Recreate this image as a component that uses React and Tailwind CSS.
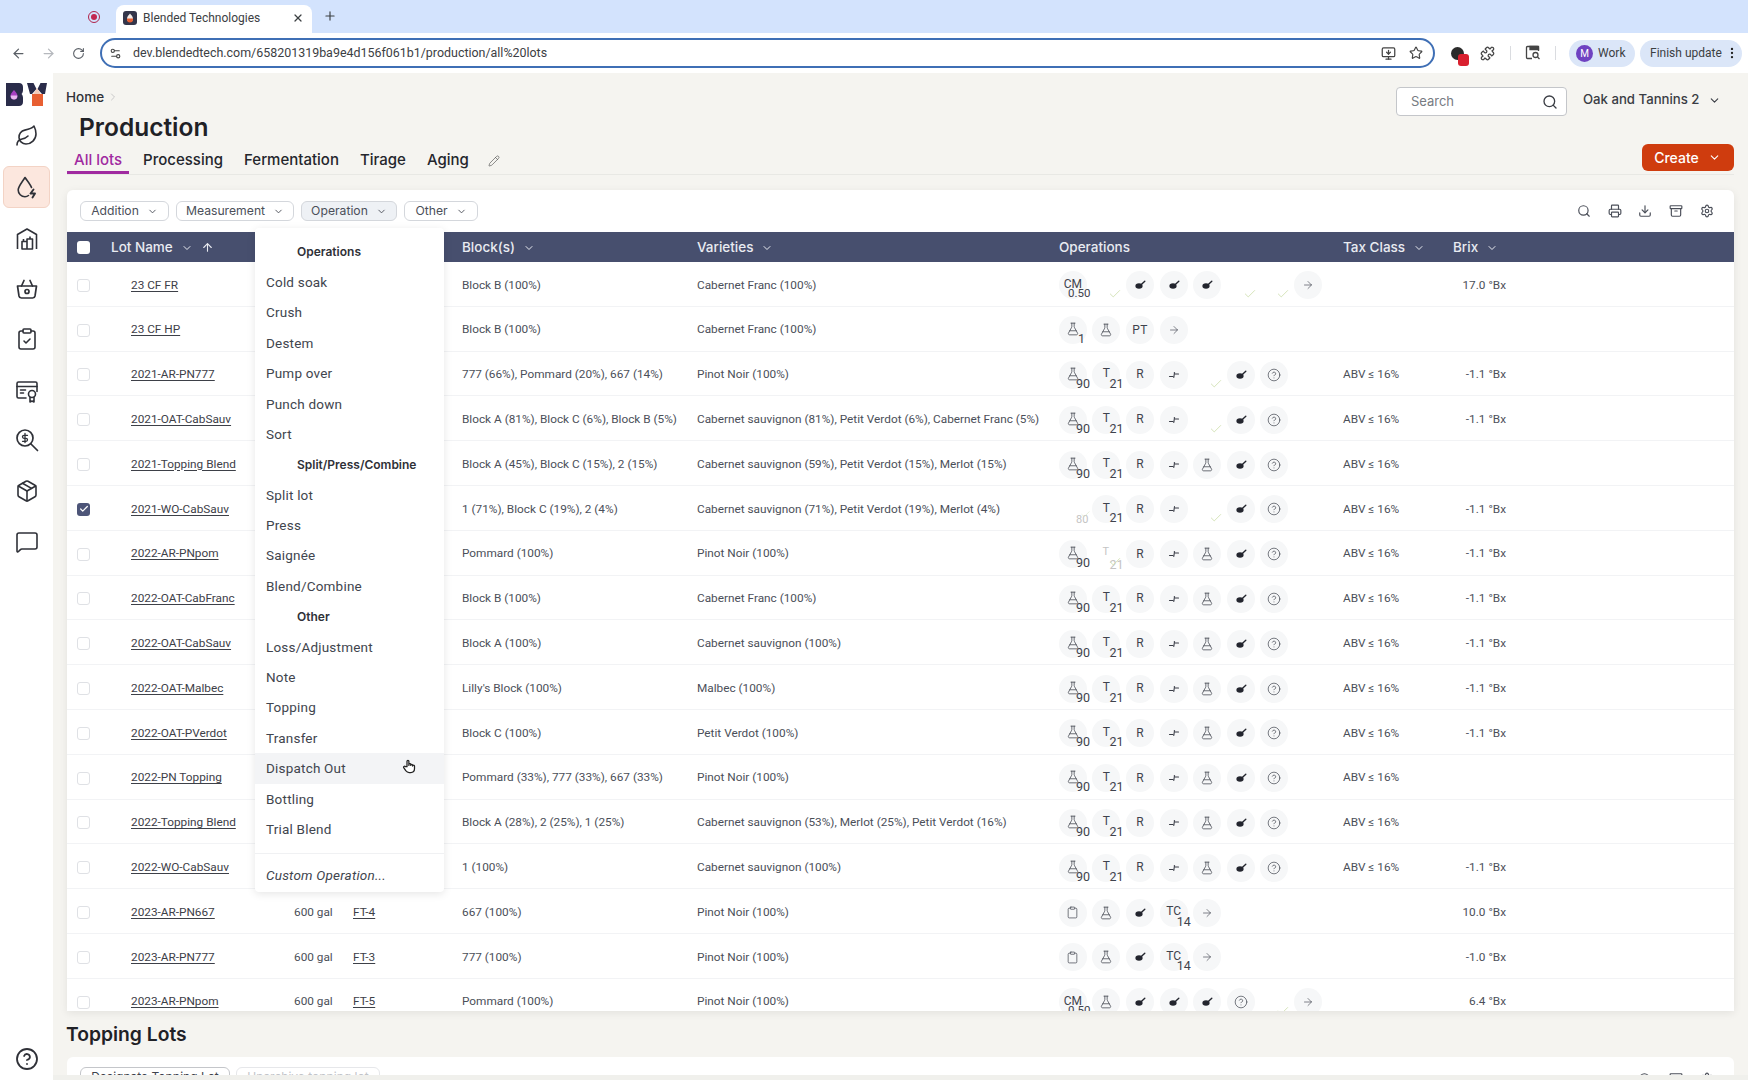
import { ArrowLeft, ArrowRight, Archive, Check, ChevronDown, ChevronRight, CircleHelp, Clipboard, ClipboardCheck, Download, EllipsisVertical, FlaskConical, Leaf, MessageSquare, Package, Pencil, Plus, Printer, RotateCw, Search, Settings, Settings2, Star, X, ArrowUp, Puzzle, MonitorDown } from 'lucide-react';

const full = ['f90', 't21', 'r', 's', 'k', 'p', 'h'];
const gap = ['f90', 't21', 'r', 's', 'c', 'p', 'h'];

const rows = [
    { lot: '23 CF FR', blocks: 'Block B (100%)', varieties: 'Cabernet Franc (100%)', ops: ['cm', 'c', 'p', 'p', 'p', 'c', 'c', 'a'], brix: '17.0 °Bx' },
    { lot: '23 CF HP', blocks: 'Block B (100%)', varieties: 'Cabernet Franc (100%)', ops: ['f1', 'k', 'pt', 'a'] },
    { lot: '2021-AR-PN777', blocks: '777 (66%), Pommard (20%), 667 (14%)', varieties: 'Pinot Noir (100%)', ops: gap, tax: true, brix: '-1.1 °Bx' },
    { lot: '2021-OAT-CabSauv', blocks: 'Block A (81%), Block C (6%), Block B (5%)', varieties: 'Cabernet sauvignon (81%), Petit Verdot (6%), Cabernet Franc (5%)', ops: gap, tax: true, brix: '-1.1 °Bx' },
    { lot: '2021-Topping Blend', blocks: 'Block A (45%), Block C (15%), 2 (15%)', varieties: 'Cabernet sauvignon (59%), Petit Verdot (15%), Merlot (15%)', ops: full, tax: true },
    { lot: '2021-WO-CabSauv', checked: true, blocks: '1 (71%), Block C (19%), 2 (4%)', varieties: 'Cabernet sauvignon (71%), Petit Verdot (19%), Merlot (4%)', ops: ['x80', 't21', 'r', 's', 'c', 'p', 'h'], tax: true, brix: '-1.1 °Bx' },
    { lot: '2022-AR-PNpom', blocks: 'Pommard (100%)', varieties: 'Pinot Noir (100%)', ops: ['f90', 'x21', 'r', 's', 'k', 'p', 'h'], tax: true, brix: '-1.1 °Bx' },
    { lot: '2022-OAT-CabFranc', blocks: 'Block B (100%)', varieties: 'Cabernet Franc (100%)', ops: full, tax: true, brix: '-1.1 °Bx' },
    { lot: '2022-OAT-CabSauv', blocks: 'Block A (100%)', varieties: 'Cabernet sauvignon (100%)', ops: full, tax: true, brix: '-1.1 °Bx' },
    { lot: '2022-OAT-Malbec', blocks: "Lilly's Block (100%)", varieties: 'Malbec (100%)', ops: full, tax: true, brix: '-1.1 °Bx' },
    { lot: '2022-OAT-PVerdot', blocks: 'Block C (100%)', varieties: 'Petit Verdot (100%)', ops: full, tax: true, brix: '-1.1 °Bx' },
    { lot: '2022-PN Topping', blocks: 'Pommard (33%), 777 (33%), 667 (33%)', varieties: 'Pinot Noir (100%)', ops: full, tax: true },
    { lot: '2022-Topping Blend', blocks: 'Block A (28%), 2 (25%), 1 (25%)', varieties: 'Cabernet sauvignon (53%), Merlot (25%), Petit Verdot (16%)', ops: full, tax: true },
    { lot: '2022-WO-CabSauv', blocks: '1 (100%)', varieties: 'Cabernet sauvignon (100%)', ops: full, tax: true, brix: '-1.1 °Bx' },
    { lot: '2023-AR-PN667', vol: '600 gal', vessel: 'FT-4', blocks: '667 (100%)', varieties: 'Pinot Noir (100%)', ops: ['b', 'k', 'p', 'tc', 'a'], brix: '10.0 °Bx' },
    { lot: '2023-AR-PN777', vol: '600 gal', vessel: 'FT-3', blocks: '777 (100%)', varieties: 'Pinot Noir (100%)', ops: ['b', 'k', 'p', 'tc', 'a'], brix: '-1.0 °Bx' },
    { lot: '2023-AR-PNpom', vol: '600 gal', vessel: 'FT-5', blocks: 'Pommard (100%)', varieties: 'Pinot Noir (100%)', ops: ['cm', 'k', 'p', 'p', 'p', 'h', 'c', 'a'], brix: '6.4 °Bx' },
];

const menu = [
    { title: 'Operations', items: ['Cold soak', 'Crush', 'Destem', 'Pump over', 'Punch down', 'Sort'] },
    { title: 'Split/Press/Combine', items: ['Split lot', 'Press', 'Saignée', 'Blend/Combine'] },
    { title: 'Other', items: ['Loss/Adjustment', 'Note', 'Topping', 'Transfer', 'Dispatch Out', 'Bottling', 'Trial Blend'] },
];

function Ladle() {
    return (
        <svg width="14" height="14" viewBox="0 0 14 14" className="text-[#23252e]">
            <ellipse cx="6" cy="8" rx="3.600" ry="2.700" fill="currentColor" />
            <path d="M8.300 6.500 11.800 3.200" stroke="currentColor" strokeWidth="1.400" fill="none" strokeLinecap="round" />
        </svg>
    );
}

function SplitArrow() {
    return (
        <svg width="14" height="14" viewBox="0 0 14 14" fill="none" stroke="#3a3d47" strokeWidth="1.100" strokeLinecap="round">
            <path d="M2.500 8.500H6" />
            <path d="M8 6h3.500" />
            <path d="M7.500 4.500 6.800 9.500" />
        </svg>
    );
}

function Circle({ children }) {
    return <span className="w-[28px] h-[28px] rounded-full bg-[#f6f7f8] flex items-center justify-center text-[12px] text-[#3f434d]">{children}</span>;
}

function Sub({ children }) {
    return <span className="absolute left-[20px] top-[16px] text-[12.500px] leading-[14px] text-[#3f434d]">{children}</span>;
}

function Op({ type }) {
    let inner = null;
    if (type === 'c') {
        return (
            <span className="w-[33.6px] h-[28px] flex items-center justify-center">
                <Check size={14} strokeWidth={1.500} className="text-[#cfdfb0] translate-x-[9px] translate-y-[9px]" />
            </span>
        );
    }
    if (type === 'x80') {
        return (
            <span className="relative w-[33.6px] h-[28px]">
                <span className="absolute left-[20px] top-[18px] text-[11px] leading-[14px] text-[#c4c4c4]">80</span>
                <Check size={11} strokeWidth={1.200} className="absolute left-[24px] top-[14px] text-[#d6e3c3]" />
            </span>
        );
    }
    if (type === 'x21') {
        return (
            <span className="relative w-[33.6px] h-[28px]">
                <span className="absolute left-[13px] top-[5px] text-[11px] leading-[14px] text-[#c4c4c4]">T</span>
                <span className="absolute left-[20px] top-[18px] text-[12.500px] leading-[14px] text-[#c4c4c4]">21</span>
                <Check size={14} strokeWidth={1.500} className="absolute left-[18px] top-[15px] text-[#cfdfb0]" />
            </span>
        );
    }
    if (type === 'f90' || type === 'f1') inner = <FlaskConical size={14} strokeWidth={1.300} className="-mt-[2px]" />;
    if (type === 'k') inner = <FlaskConical size={14} strokeWidth={1.300} />;
    if (type === 't21') inner = <span className="-mt-[3px]">T</span>;
    if (type === 'r') inner = <span className="-mt-[1px]">R</span>;
    if (type === 'pt') inner = <span className="-mt-[1px] tracking-wide">PT</span>;
    if (type === 's') inner = <SplitArrow />;
    if (type === 'p') inner = <Ladle />;
    if (type === 'h') inner = <CircleHelp size={14} strokeWidth={1.200} />;
    if (type === 'a') inner = <ArrowRight size={12} strokeWidth={1.300} />;
    if (type === 'b') inner = <Clipboard size={13} strokeWidth={1.300} />;
    if (type === 'cm') inner = <span className="-mt-[3px]">CM</span>;
    if (type === 'tc') inner = <span className="-mt-[3px]">TC</span>;
    return (
        <span className="relative w-[33.6px] h-[28px] flex justify-center">
            <Circle>{inner}</Circle>
            {type === 'f90' && <Sub>90</Sub>}
            {type === 'f1' && <span className="absolute left-[22px] top-[16px] text-[12.500px] leading-[14px] text-[#3f434d]">1</span>}
            {type === 't21' && <Sub>21</Sub>}
            {type === 'tc' && <Sub>14</Sub>}
            {type === 'cm' && <span className="absolute left-[12px] top-[16px] text-[11.500px] leading-[13px] text-[#3f434d]">0.50</span>}
        </span>
    );
}

function Filter({ label, active, className }) {
    return (
        <button className={`h-[20px] rounded-md border border-[#d4d7dc] flex items-center justify-center gap-[8px] text-[12.200px] text-[#4b4f59] ${active ? 'bg-[#eef1f5]' : 'bg-white'} ${className}`}>
            {label} <ChevronDown size={11} />
        </button>
    );
}

function HeadChevron({ label, className }) {
    return (
        <span className={`flex items-center gap-[8px] text-[13.500px] font-medium ${className}`}>
            {label} <ChevronDown size={12} />
        </span>
    );
}

function Logo() {
    return (
        <svg width="41" height="23" viewBox="0 0 41 23">
            <path d="M0 0h13c2.500 0 4 1.500 4 4v3c0 1.500-.5 3-1.500 4 1 1 1.500 2.500 1.500 4v4c0 2.500-1.500 4-4 4H0z" fill="#2a2c4a" />
            <path d="M8 7c1.300 1.800 3.500 3.400 3.500 6a3.500 3.500 0 0 1-7 0c0-2.600 2.200-4.200 3.500-6z" fill="#a63fc0" />
            <path d="M4.700 12.500h6.600c.2 2.700-1.300 4-3.300 4s-3.500-1.300-3.300-4z" fill="#e9b7ef" />
            <path d="M21 0h6.500l3 6-4.500 5h-2zM41 0h-6.500l-3 6 4.500 5h3z" fill="#2a2c4a" />
            <path d="M31 5l4 6.500h-8z" fill="#f3c9b8" />
            <rect x="26" y="11" width="11" height="12" fill="#e85f32" />
        </svg>
    );
}

function DropBolt() {
    return (
        <svg width="24" height="26" viewBox="0 0 24 26" fill="none" stroke="#2f3138" strokeWidth="1.600" strokeLinecap="round" strokeLinejoin="round">
            <path d="M13.500 21.500c-1 .8-2.300 1.200-3.500 1.200a6.800 6.800 0 0 1-6.800-6.800c0-3.200 3-6.500 6.800-12.400 2.800 4 5.600 7 6.500 10" />
            <path d="M18.500 15.500 15.500 19.500h4.500l-2.500 4" strokeWidth="1.900" />
        </svg>
    );
}

function Building() {
    return (
        <svg width="24" height="24" viewBox="0 0 24 24" fill="none" stroke="#2f3138" strokeWidth="1.600" strokeLinejoin="round">
            <path d="M2.500 22V7.500L12 2l9.500 5.500V22" />
            <path d="M7 22v-7.500h5V22zM12 22v-10h5.500V22zM8.500 14.500V12M15 12V9.500" />
        </svg>
    );
}

function Basket() {
    return (
        <svg width="24" height="24" viewBox="0 0 24 24" fill="none" stroke="#2f3138" strokeWidth="1.700" strokeLinecap="round" strokeLinejoin="round">
            <path d="M2.500 9h19l-1.500 10a2.500 2.500 0 0 1-2.500 2h-11a2.500 2.500 0 0 1-2.500-2z" />
            <path d="M6.500 9 9 3.500M17.500 9 15 3.500" />
            <circle cx="12" cy="14.500" r="2" />
        </svg>
    );
}

function Cert() {
    return (
        <svg width="24" height="24" viewBox="0 0 24 24" fill="none" stroke="#2f3138" strokeWidth="1.600" strokeLinecap="round" strokeLinejoin="round">
            <path d="M11 19H3.500a1.500 1.500 0 0 1-1.500-1.500v-13A1.500 1.500 0 0 1 3.500 3h17A1.500 1.500 0 0 1 22 4.500v8" />
            <path d="M2 7.500h20M5.500 11h5M5.500 14h3" />
            <circle cx="17" cy="15" r="3.500" />
            <path d="M15 18.500V23l2-1 2 1v-4.500" />
        </svg>
    );
}

function MoneySearch() {
    return (
        <svg width="24" height="24" viewBox="0 0 24 24" fill="none" stroke="#2f3138" strokeWidth="1.700" strokeLinecap="round" strokeLinejoin="round">
            <circle cx="10" cy="10" r="8" />
            <path d="M16 16l6.500 6.500" />
            <path d="M10 5.500v9M12.500 7.300H9a1.500 1.500 0 0 0 0 3h2a1.500 1.500 0 0 1 0 3H7.500" strokeWidth="1.300" />
        </svg>
    );
}

function SideSearch() {
    return (
        <svg width="16" height="16" viewBox="0 0 16 16" fill="none" stroke="#444" strokeWidth="1.300">
            <path d="M7 13.500H2.500a1 1 0 0 1-1-1v-10a1 1 0 0 1 1-1h10a1 1 0 0 1 1 1V6" />
            <path d="M5 1.500h8.500v3H5z" fill="#444" />
            <circle cx="10.500" cy="10" r="2.500" />
            <path d="M12.500 12l2 2" />
        </svg>
    );
}

function Favicon() {
    return (
        <svg width="14" height="14" viewBox="0 0 14 14">
            <rect width="14" height="14" rx="3" fill="#33354a" />
            <path d="M7 2.500c1.200 1.500 3 3 3 5.200a3 3 0 0 1-6 0C4 5.500 5.800 4 7 2.500z" fill="#f3ece8" />
            <path d="M4 7.500h6v1a3 3 0 0 1-6 0z" fill="#e85f32" />
        </svg>
    );
}

function BrowserBar() {
    return (
        <div className="font-['Roboto',sans-serif] shrink-0">
            <div className="h-[33px] bg-[#d3e3fd] flex items-end text-[#3c4043]">
                <span className="ml-[88px] mb-[10px] w-[12px] h-[12px] rounded-full border border-[#b0224a] flex items-center justify-center">
                    <span className="w-[6px] h-[6px] rounded-full bg-[#c2264f]" />
                </span>
                <div className="ml-[16px] w-[196px] h-[28px] pb-[3px] bg-white rounded-t-lg flex items-center pl-[7px] pr-[8px]">
                    <Favicon />
                    <span className="ml-[6px] text-[12px] flex-1">Blended Technologies</span>
                    <X size={12} strokeWidth={2.500} />
                </div>
                <Plus size={14} className="ml-[11px] mb-[10px]" />
            </div>
            <div className="h-[40px] bg-white flex items-center text-[#5a5f66]">
                <ArrowLeft size={15} className="ml-[11px]" />
                <ArrowRight size={15} className="ml-[15px] text-[#b5b8bd]" />
                <RotateCw size={13} className="ml-[16px]" />
                <div className="ml-[15px] w-[1335px] h-[30px] rounded-full border-2 border-[#3f6fb5] flex items-center pl-[7px] pr-[10px]">
                    <Settings2 size={13} className="text-[#444]" />
                    <span className="ml-[11px] text-[12.450px] text-[#3c4043] flex-1">dev.blendedtech.com/658201319ba9e4d156f061b1/production/all%20lots</span>
                    <MonitorDown size={15} className="text-[#444]" />
                    <Star size={14} className="ml-[13px] text-[#444]" />
                </div>
                <span className="relative ml-[16px] w-[13px] h-[13px] rounded-full bg-[#2b2b2b]">
                    <span className="absolute left-[7px] top-[7px] w-[11px] h-[12px] rounded-[3px] bg-[#d9202f]" />
                </span>
                <Puzzle size={15} className="ml-[16px] text-[#444]" />
                <span className="ml-[15px] w-px h-[14px] bg-[#dadce0]" />
                <span className="ml-[14px]"><SideSearch /></span>
                <span className="ml-[14px] w-px h-[14px] bg-[#dadce0]" />
                <span className="ml-[13px] w-[66px] h-[27px] rounded-full bg-[#dbe6f8] flex items-center pl-[7px] gap-[5px] text-[12px] text-[#3c4043]">
                    <span className="w-[17px] h-[17px] rounded-full bg-[#6f42c1] text-white text-[10px] flex items-center justify-center">M</span>
                    Work
                </span>
                <span className="ml-[5px] w-[102px] h-[27px] rounded-full bg-[#dbe6f8] flex items-center pl-[10px] text-[12px] text-[#3c4043]">
                    Finish update
                    <EllipsisVertical size={14} className="ml-[3px] text-[#222]" />
                </span>
            </div>
        </div>
    );
}

function Sidebar() {
    return (
        <aside className="w-[53px] shrink-0 bg-white flex flex-col items-center relative pb-[9px]">
            <div className="h-[36px] mt-[3px] flex items-center"><Logo /></div>
            <div className="h-[47px] flex items-center"><Leaf size={24} strokeWidth={1.600} className="text-[#2f3138]" /></div>
            <div className="h-[42px] w-[47px] mt-[7px] mb-[5px] rounded-md bg-[#fce7de] border border-[#f3d3c5] flex items-center justify-center"><DropBolt /></div>
            <div className="h-[52px] flex items-center"><Building /></div>
            <div className="h-[48px] flex items-center"><Basket /></div>
            <div className="h-[52px] flex items-center"><ClipboardCheck size={24} strokeWidth={1.600} className="text-[#2f3138]" /></div>
            <div className="h-[52px] flex items-center"><Cert /></div>
            <div className="h-[46px] flex items-center"><MoneySearch /></div>
            <div className="h-[56px] flex items-center"><Package size={24} strokeWidth={1.600} className="text-[#2f3138]" /></div>
            <div className="h-[46px] flex items-center"><MessageSquare size={24} strokeWidth={1.600} className="text-[#2f3138]" /></div>
            <div className="mt-auto"><CircleHelp size={24} strokeWidth={1.800} className="text-[#2f3138]" /></div>
        </aside>
    );
}

function LotRow({ row }) {
    return (
        <div className="h-[44.8px] pt-[3px] flex items-center border-b border-[#f2f3f5] font-['Roboto',sans-serif] text-[11.800px] text-[#4b4f59]">
            <div className="w-[64px] pl-[10px] shrink-0">
                {row.checked ? (
                    <span className="w-[13px] h-[13px] rounded-[3px] bg-[#4d5578] flex items-center justify-center"><Check size={10} strokeWidth={3} className="text-white" /></span>
                ) : (
                    <span className="block w-[13px] h-[13px] rounded-[3px] border border-[#dfe1e5] bg-white" />
                )}
            </div>
            <a className="w-[163px] shrink-0 text-[#3d4048] underline underline-offset-2">{row.lot}</a>
            <div className="w-[59px] shrink-0">{row.vol}</div>
            <a className="w-[109px] shrink-0 text-[#3d4048] underline underline-offset-2">{row.vessel}</a>
            <div className="w-[235px] shrink-0">{row.blocks}</div>
            <div className="w-[362px] shrink-0">{row.varieties}</div>
            <div className="w-[284px] -ml-[3px] mr-[3px] shrink-0 flex">
                {row.ops.map((o, i) => <Op key={i} type={o} />)}
            </div>
            <div className="w-[107px] shrink-0">{row.tax ? 'ABV ≤ 16%' : ''}</div>
            <div className="w-[56px] shrink-0 text-right">{row.brix}</div>
        </div>
    );
}

function OperationMenu() {
    return (
        <div className="absolute left-[188px] top-[38px] w-[189px] h-[664px] bg-white rounded-sm shadow-[0_2px_8px_rgba(0,0,0,0.1)] pt-[8.500px] text-[13.500px] tracking-[0.2px] font-['Roboto',sans-serif] text-[#41454e]">
            {menu.map(group => (
                <div key={group.title}>
                    <div className="h-[30.4px] pt-[1.500px] pl-[42px] flex items-center text-[12px] tracking-normal font-semibold font-['Inter',sans-serif] text-[#2f3138]">{group.title}</div>
                    {group.items.map(item => (
                        <div key={item} className={`h-[30.4px] pl-[11px] flex items-center ${item === 'Dispatch Out' ? 'bg-[#f3f4f6]' : ''}`}>{item}</div>
                    ))}
                </div>
            ))}
            <div className="mt-[9px] border-t border-[#f0f1f3] pt-[11px] pl-[11px] italic">Custom Operation...</div>
            <span className="absolute left-[147px] top-[530px] text-[#222]">
                <svg width="15" height="16" viewBox="0 0 24 24" fill="white" stroke="currentColor" strokeWidth="2" strokeLinejoin="round">
                    <path d="M8 13V4.500a1.500 1.500 0 0 1 3 0V11V9.500a1.500 1.500 0 0 1 3 0V11a1.500 1.500 0 0 1 3 0v1a1.500 1.500 0 0 1 3 0v4.500c0 3.500-2.500 6-6 6h-2.500c-2.500 0-4-1-5.500-3L3 15a1.500 1.500 0 0 1 2.500-2z" />
                </svg>
            </span>
        </div>
    );
}

export default function App() {
    return (
        <div className="h-[1080px] w-[1748px] flex flex-col overflow-hidden bg-[#f0f0ec] font-['Inter',sans-serif]">
            <BrowserBar />
            <div className="flex flex-1 min-h-0">
                <Sidebar />
                <main className="flex-1 h-[1002px] overflow-hidden bg-[#f5f4f0] pl-[14px] pr-[14.500px]">
                    <div className="flex justify-between h-[71px]">
                        <div className="pt-[14px]">
                            <div className="-ml-[1px] flex items-center gap-[3px] text-[13.500px] font-medium leading-[20px] text-[#2f3138]">
                                Home <ChevronRight size={12} className="text-[#c9c9c9]" />
                            </div>
                            <h1 className="mt-[3px] ml-[12px] text-[24.500px] leading-[35px] font-semibold text-[#1f2126]">Production</h1>
                        </div>
                        <div className="flex items-start pt-[14px]">
                            <div className="w-[171px] h-[29px] border border-[#c4c6ca] rounded bg-white flex items-center justify-between pl-[14px] pr-[8px] text-[13px] text-[#777b82]">
                                Search <Search size={16} className="text-[#3a3d44]" />
                            </div>
                            <div className="ml-[16px] h-[26px] flex items-center gap-[8px] text-[13.200px] font-medium text-[#3a3d44]">
                                Oak and Tannins 2 <ChevronDown size={13} className="mr-[13px]" />
                            </div>
                        </div>
                    </div>
                    <div className="h-[31px] flex items-start justify-between border-b border-[#e8e8e4]">
                        <div className="flex items-start gap-[7px] text-[15px] font-medium text-[#24262c]">
                            <div className="h-[30px] px-[7px] border-b-[3px] border-[#a02aa0] text-[#a02aa0] leading-[32px]">All lots</div>
                            <div className="h-[30px] px-[7px] leading-[32px]">Processing</div>
                            <div className="h-[30px] px-[7px] leading-[32px]">Fermentation</div>
                            <div className="h-[30px] px-[7px] leading-[32px]">Tirage</div>
                            <div className="h-[30px] px-[7px] leading-[32px]">Aging</div>
                            <Pencil size={12} strokeWidth={1.200} className="ml-[5px] mt-[11px] text-[#444]" />
                        </div>
                        <button className="w-[92px] h-[27px] rounded-md bg-[#cf3c0e] text-white text-[14px] font-medium flex items-center justify-center gap-[9px]">
                            Create <ChevronDown size={13} />
                        </button>
                    </div>

                    <section className="relative mt-[15px] h-[821px] bg-white rounded-t-md shadow-[0_2px_8px_rgba(0,0,0,0.08)] flex flex-col">
                        <div className="h-[42px] shrink-0 flex items-center justify-between pl-[13px] pr-[20px]">
                            <div className="flex gap-[7px]">
                                <Filter label="Addition" className="w-[89px]" />
                                <Filter label="Measurement" className="w-[118px]" />
                                <Filter label="Operation" active className="w-[96px]" />
                                <Filter label="Other" className="w-[74px]" />
                            </div>
                            <div className="flex gap-[16.600px] text-[#4b4f59]">
                                <Search size={14} />
                                <Printer size={14} />
                                <Download size={14} />
                                <Archive size={14} />
                                <Settings size={14} />
                            </div>
                        </div>
                        <div className="h-[30px] pt-[1px] shrink-0 bg-[#474f6e] text-[#e9ebf1] flex items-center">
                            <div className="w-[44px] pl-[10px] shrink-0"><span className="block w-[13px] h-[13px] rounded-[3px] bg-white" /></div>
                            <div className="w-[351px] shrink-0 flex items-center gap-[8px]">
                                <HeadChevron label="Lot Name" />
                                <ArrowUp size={13} />
                            </div>
                            <HeadChevron label="Block(s)" className="w-[235px] shrink-0" />
                            <HeadChevron label="Varieties" className="w-[362px] shrink-0" />
                            <div className="w-[284px] shrink-0 text-[13.500px] font-medium">Operations</div>
                            <HeadChevron label="Tax Class" className="w-[110px] shrink-0" />
                            <HeadChevron label="Brix" />
                        </div>
                        <div className="flex-1 overflow-hidden">
                            {rows.map(r => <LotRow key={r.lot} row={r} />)}
                        </div>
                        <OperationMenu />
                    </section>

                    <h2 className="mt-[10px] -ml-[1px] h-[26px] text-[19.300px] leading-[26px] font-semibold text-[#1f2126]">Topping Lots</h2>
                    <section className="mt-[10px] h-[40px] bg-white rounded-t-md pt-[10px] pl-[13px] pr-[20px] flex justify-between">
                        <div className="flex gap-[6px]">
                            <button className="h-[20px] w-[150px] rounded-md border border-[#c4c6ca] text-[12px] text-[#3f434d]">Designate Topping Lot</button>
                            <button className="h-[20px] w-[144px] rounded-md border border-[#e6e7ea] text-[12px] text-[#c2c4c9]">Unarchive topping lot</button>
                        </div>
                        <div className="flex gap-[16.600px] pt-[5px] text-[#4b4f59]">
                            <Search size={14} />
                            <Archive size={14} />
                            <Settings size={14} />
                        </div>
                    </section>
                </main>
            </div>
        </div>
    );
}
